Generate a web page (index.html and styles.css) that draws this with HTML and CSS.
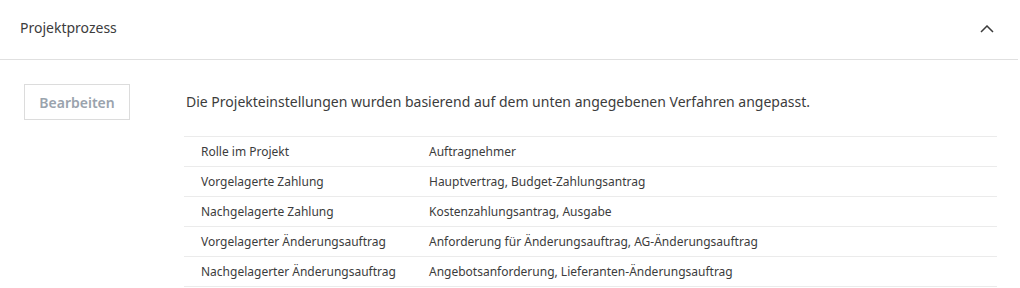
FILE: index.html
```html
<!DOCTYPE html>
<html>
  <head>
    <meta charset="utf-8">
    <title>Projektprozess</title>
    <link rel="stylesheet" href="styles.css">
  </head>
  <body>
    <div class="panel">
      <div class="panel-header">
        <span class="panel-title">Projektprozess</span>
        <svg class="chevron" width="14" height="8" viewBox="0 0 14 8">
          <path d="M1 7 L7 1 L13 7" fill="none" stroke="#3c3c3c" stroke-width="1.5"/>
        </svg>
      </div>
      <div class="panel-body">
        <div class="side">
          <button class="edit-button" disabled>Bearbeiten</button>
        </div>
        <div class="main">
          <p class="intro">Die Projekteinstellungen wurden basierend auf dem unten angegebenen Verfahren angepasst.</p>
          <table class="settings">
            <tr><td>Rolle im Projekt</td><td>Auftragnehmer</td></tr>
            <tr><td>Vorgelagerte Zahlung</td><td>Hauptvertrag, Budget-Zahlungsantrag</td></tr>
            <tr><td>Nachgelagerte Zahlung</td><td>Kostenzahlungsantrag, Ausgabe</td></tr>
            <tr><td>Vorgelagerter Änderungsauftrag</td><td>Anforderung für Änderungsauftrag, AG-Änderungsauftrag</td></tr>
            <tr><td>Nachgelagerter Änderungsauftrag</td><td>Angebotsanforderung, Lieferanten-Änderungsauftrag</td></tr>
          </table>
        </div>
      </div>
    </div>
  </body>
</html>
```

FILE: styles.css
```css
body {
  margin: 0;
  font-family: "Noto Sans", sans-serif;
  color: #3c3c3c;
  background: #fff;
}
.panel-header {
  height: 58px;
  display: flex;
  align-items: center;
  justify-content: space-between;
  padding: 0 24px 1px 20px;
  border-bottom: 1px solid #e0e0e0;
  margin-right: 2px;
}
.panel-title {
  font-size: 14px;
  margin-top: -4px;
}
.chevron {
  display: block;
  margin-top: -1px;
}
.panel-body {
  display: flex;
  padding: 24px 23px 0 24px;
}
.side {
  width: 160px;
}
.edit-button {
  width: 106px;
  height: 36px;
  background: #fff;
  border: 1px solid #dcdcdc;
  border-radius: 0;
  color: #9aa3ad;
  font-family: inherit;
  font-size: 14px;
  font-weight: 600;
  padding: 0;
}
.main {
  flex: 1;
}
.intro {
  margin: 0 0 0 2px;
  height: 36px;
  line-height: 36px;
  font-size: 14px;
}
.settings {
  width: 100%;
  margin-top: 16px;
  border-collapse: collapse;
  font-size: 12px;
}
.settings td {
  height: 29px;
  padding: 0 0 0 17px;
  border-top: 1px solid #ebebeb;
  border-bottom: 1px solid #ebebeb;
}
.settings td:first-child {
  width: 211px;
}
```
